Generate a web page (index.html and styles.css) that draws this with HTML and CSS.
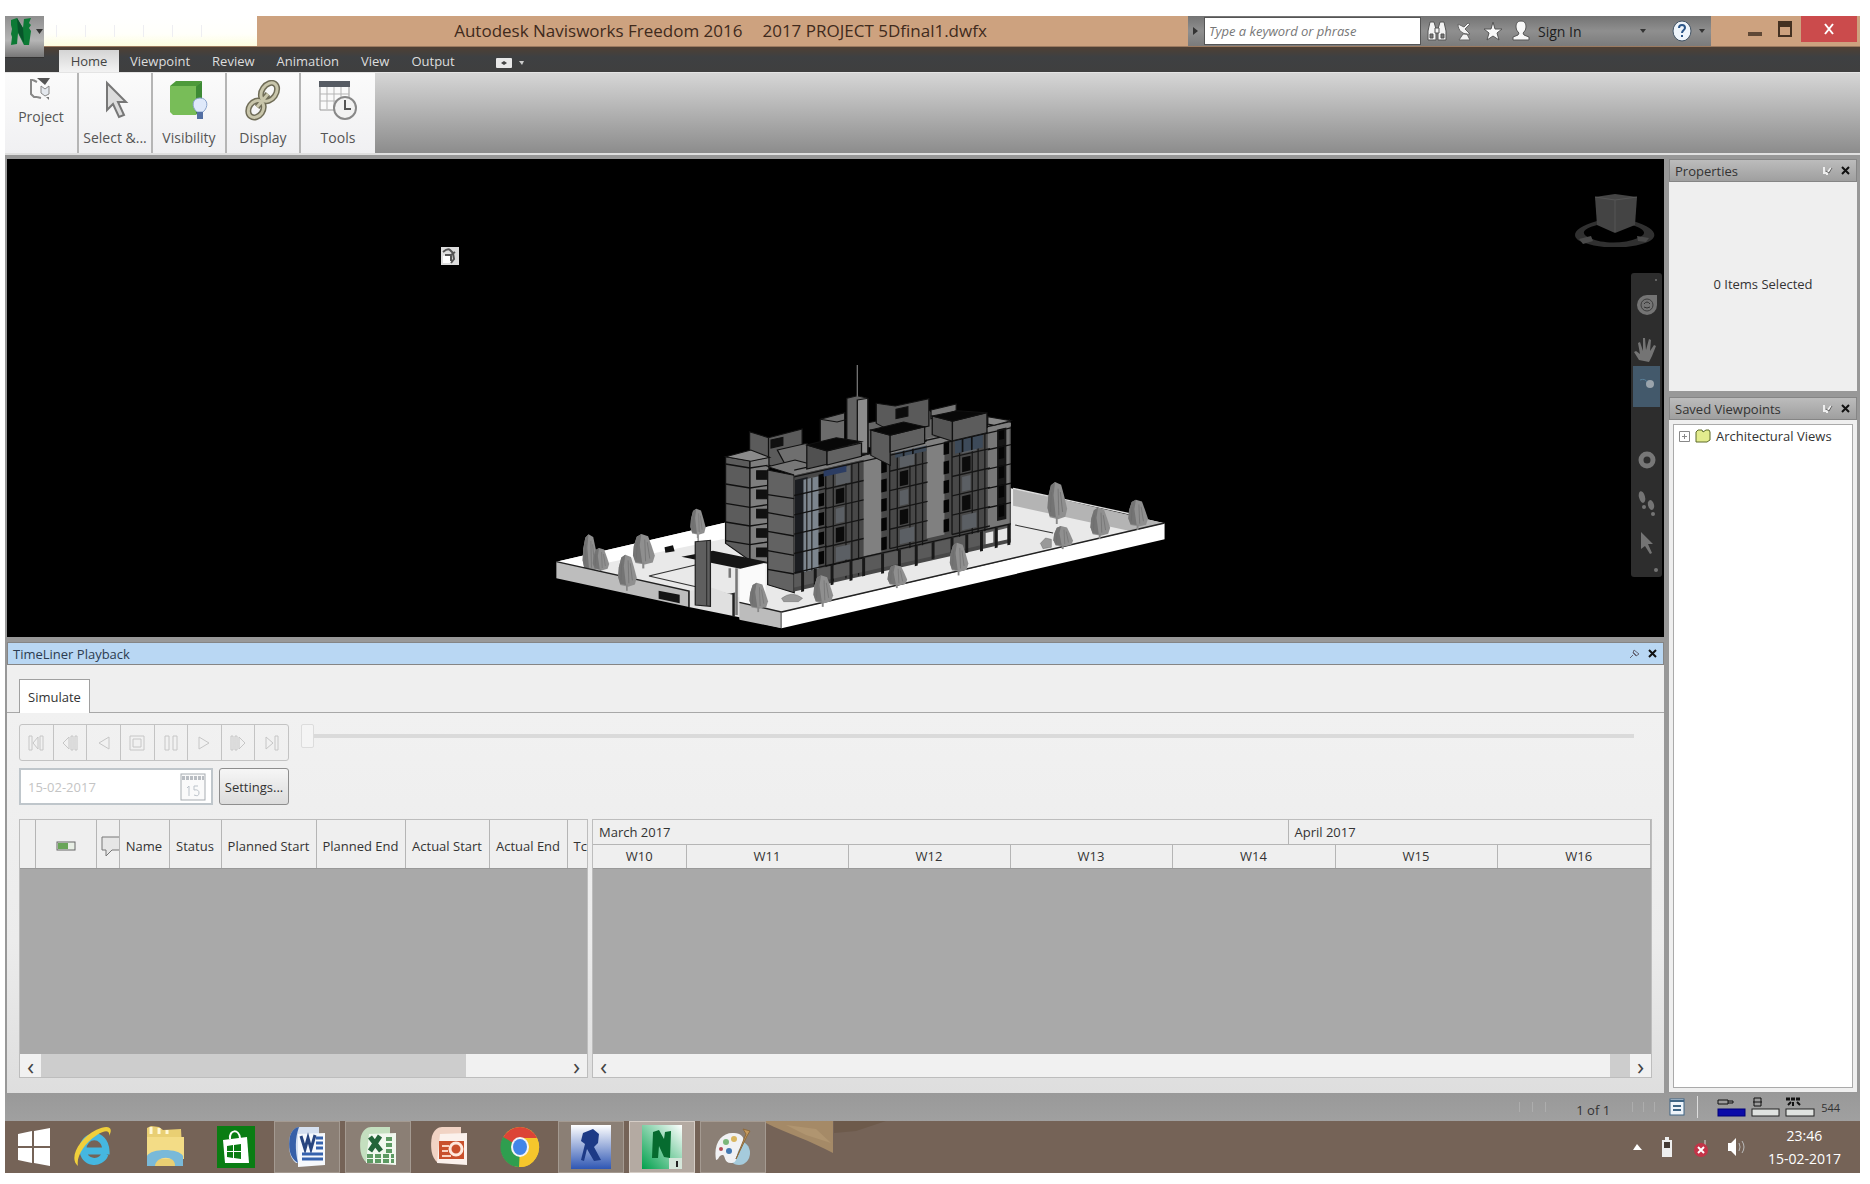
FILE: index.html
```html
<!DOCTYPE html>
<html lang="en">
<head>
<meta charset="utf-8">
<title>Autodesk Navisworks Freedom 2016</title>
<link rel="stylesheet" href="styles.css">
</head>
<body>
<div class="desktop">
  <header class="chrome">
    <button class="app-button" aria-label="Application menu">
      <svg width="22" height="28" viewBox="0 0 22 28"><path d="M1 2l6-2 6 10 1-9 7-1-2 5 2 2-2 3 2 3-2 14h-5L8 15l-1 11-6 1 1-8-1-3 1-5-1-4z" fill="#0c7a35"/><path d="M7 0l6 10 1 15L8 14z" fill="#07552a"/></svg>
      <svg width="7" height="5" viewBox="0 0 7 5"><path d="M0 0h7L3.500 5z" fill="#333"/></svg>
    </button>
    <div class="titlebar">
      <div class="quick-access"><i></i><i></i><i></i><i></i><i></i><i></i></div>
      <h1 class="title"><span>Autodesk Navisworks Freedom 2016</span><span>2017 PROJECT 5Dfinal1.dwfx</span></h1>
      <div class="infocenter">
        <span class="caret-right"></span>
        <input class="search" type="text" placeholder="Type a keyword or phrase" aria-label="Search">
        <button class="ic" aria-label="Find"><svg width="20" height="22" viewBox="0 0 20 22"><g fill="#f4f4f4" stroke="#555"><path d="M3 2h4l2 7v11H1v-9zM13 2h4l2 9v9h-8V9z"/><path d="M8 8h4v5H8z"/><path d="M3 14h3v4H3zM14 14h3v4h-3z" fill="#777"/></g></svg></button>
        <button class="ic" aria-label="Communication center"><svg width="20" height="22" viewBox="0 0 20 22"><path d="M3 4c0 7 5 11 12 10L10 9l5-5-2-1-4 4zM8 14l-4 6h11l-3-6z" fill="#f4f4f4" stroke="#666"/></svg></button>
        <button class="ic" aria-label="Favorites"><svg width="20" height="22" viewBox="0 0 20 22"><path d="M10 2l2 7h7l-5 4 2 7-6-4-6 4 2-7-5-4h7z" fill="#f8f8f8" stroke="#555"/></svg></button>
        <button class="sign-in"><svg width="20" height="24" viewBox="0 0 20 24"><path d="M10 2c4 0 5 3 5 6s-2 5-3 6l1 2 5 2v3H2v-3l5-2 1-2c-1-1-3-3-3-6s1-6 5-6z" fill="#f8f8f8" stroke="#555"/></svg>Sign In</button>
        <span class="caret-down push"></span>
        <button class="help" aria-label="Help"><svg width="20" height="22" viewBox="0 0 20 22"><ellipse cx="10" cy="11" rx="9" ry="10" fill="#eef4fa" stroke="#456"/><path d="M7 8c0-4 6-4 6 0 0 2-3 2-3 5M10 15v2" fill="none" stroke="#2c5688" stroke-width="2"/></svg></button>
        <span class="caret-down"></span>
      </div>
      <div class="window-buttons">
        <button class="minimize" aria-label="Minimize"><i></i></button>
        <button class="restore" aria-label="Restore"><i></i></button>
        <button class="close" aria-label="Close"><svg width="12" height="12" viewBox="0 0 12 12"><path d="M2 1l8 10M10 1L2 11" stroke="#fff" stroke-width="2"/></svg></button>
      </div>
    </div>
    <nav class="tabs">
      <button class="tab active">Home</button>
      <button class="tab">Viewpoint</button>
      <button class="tab">Review</button>
      <button class="tab">Animation</button>
      <button class="tab">View</button>
      <button class="tab">Output</button>
      <button class="ribbon-toggle" aria-label="Minimize ribbon"><svg width="28" height="10" viewBox="0 0 28 10"><rect width="16" height="10" rx="1" fill="#e8e8e8"/><path d="M5 5l3-2 3 2-3 2z" fill="#444"/><path d="M23 3h5l-2 4z" fill="#ccc"/></svg></button>
    </nav>
  </header>

  <section class="ribbon">
    <button class="panel-button first"><svg width="24" height="24" viewBox="0 0 24 24"><path d="M4 3H2v14l3 3h3M4 3l4 2M8 20l4 1" fill="none" stroke="#888" stroke-width="2"/><path d="M8 1h13l-5 7z" fill="#555"/><path d="M12 9l4 3 4-3v8l-4 2-4-3z" fill="#e4e8ee" stroke="#888"/><path d="M17 20h3v3z" fill="#777"/></svg>Project</button>
    <button class="panel-button"><svg width="40" height="42" viewBox="0 0 40 42"><path d="M12 3v27l6-6 6 13 5-2-6-13h8z" fill="#dcdcdc" stroke="#777" stroke-width="2"/></svg>Select &amp;...</button>
    <button class="panel-button"><svg width="40" height="42" viewBox="0 0 40 42"><path d="M1 6l6-5h26l-5 6z" fill="#4d9a3a"/><path d="M1 6h26v29H4l-3-3z" fill="#78bd58"/><path d="M27 7l6-6v24l-6 10z" fill="#3d8a34"/><path d="M28 32c-6-5-5-14 3-14s9 9 3 14z" fill="#dfe9fa" stroke="#8ba4cc"/><path d="M28 32h6v7h-6z" fill="#536fa3"/></svg>Visibility</button>
    <button class="panel-button"><svg width="40" height="42" viewBox="0 0 40 42"><g fill="none" stroke="#6f6c57" stroke-width="6"><ellipse cx="26" cy="12" rx="7" ry="10" transform="rotate(35 26 12)"/><ellipse cx="13" cy="29" rx="7" ry="9" transform="rotate(35 13 29)"/><path d="M14 27l11-13"/></g><g fill="none" stroke="#c9c6ab" stroke-width="3"><ellipse cx="26" cy="12" rx="7" ry="10" transform="rotate(35 26 12)"/><ellipse cx="13" cy="29" rx="7" ry="9" transform="rotate(35 13 29)"/><path d="M14 27l11-13"/></g></svg>Display</button>
    <button class="panel-button"><svg width="40" height="42" viewBox="0 0 40 42"><path d="M2 2h29v28H2z" fill="#fafafa" stroke="#999"/><path d="M1 1h31v6H1z" fill="#565b63"/><path d="M2 14h29M2 21h29M9 7v22M16 7v22M23 7v22" stroke="#b5b5b5"/><circle cx="27" cy="28" r="11" fill="#f2f2f2" stroke="#888" stroke-width="2"/><path d="M27 20v9h6" fill="none" stroke="#555" stroke-width="2"/></svg>Tools</button>
  </section>

  <main class="workspace">
    <div class="left">
      <section class="viewport">
        <svg class="pointer" width="18" height="18" viewBox="0 0 18 18"><rect width="18" height="18" fill="#ddd"/><path d="M2 9l9-2v9H2z" fill="#fff"/><path d="M2 5q5-4 7-2l3 3 1 6-3 4M4 8h6v6M10 8l4-3" fill="none" stroke="#555" stroke-width="2"/></svg>
        <svg class="model" viewBox="0 0 1568 870" preserveAspectRatio="none">
          <defs>
            <g id="tree"><path d="M22 0l16 8 8 34 8 38-5 24-19 8-22-6-6-28 2-34 7-34z" fill="#8f8f8f"/><path d="M22 0l-4 40 6 66-16-4-6-24 2-34 7-34z" fill="#747474"/><path d="M36 30l6 60M30 20l2 80M12 30l-2 60" stroke="#6c6c6c" stroke-width="2"/><path d="M24 104h5v22h-5z" fill="#888"/></g>
            <g id="floors"><path d="M0 0v290" stroke="#111" stroke-width="3"/><path d="M0 58h90M0 116h90M0 174h90M0 232h90M0 290h90" stroke="#151515" stroke-width="4"/><path d="M18 0v340M62 0v340M78 0v340M48 0v340" stroke="#161616" stroke-width="3"/><path d="M24 66h20v44H24zM24 182h20v44H24z" fill="#0b0b0b"/><path d="M24 4h34v50H24zM24 124h20v44H24zM24 240h34v44H24z" fill="#5b5f64"/></g>
            <g id="slits"><path d="M2 10h13v38H2zM2 68h13v38H2zM2 126h13v38H2zM2 184h13v38H2zM2 242h13v38H2z" fill="#050505"/></g>
          </defs>
          <path d="M65 635L465 518 900 440l245-25 365 105-910 267z" fill="#e9e9e9"/>
          <path d="M65 635L465 518v48L180 640l-60 15z" fill="#fff"/>
          <path d="M1150 415l360 105-85 22-275-75z" fill="#b4b4b4"/>
          <path d="M1150 415l290 80" stroke="#ddd" stroke-width="4"/>
          <path d="M285 678l160-48M285 678l200 58M1155 525l90 24M430 745l60-16" stroke="#333" stroke-width="3"/>
          <use href="#tree" transform="translate(1230 396) scale(.9 1)"/><use href="#tree" transform="translate(382 476) scale(.7 .7)"/><path d="M402 545v30" stroke="#999" stroke-width="4"/>
          <g stroke="#111" stroke-width="3">
            <path d="M524 245l45 18 80-26v100l-60 20-65-40z" fill="#5b5b5b"/><path d="M569 263v60"/><path d="M575 270l28-8v24l-28 8z" fill="#111"/>
            <path d="M590 300l70-20 40 60-80 30z" fill="#6f6f6f"/>
            <path d="M692 208l58-20v120h-58z" fill="#6b6b6b"/><path d="M692 208l40 8 25-8" fill="none"/>
            <path d="M800 220l150-40 60 60-150 70-60-20z" fill="#666"/>
            <path d="M825 160l45 8 80-22v82l-80 22-45-30z" fill="#5a5a5a"/><path d="M872 178l28-8v28l-28 8z" fill="#0c0c0c"/>
            <path d="M955 180l60-18v20l-60 24z" fill="#777"/>
            <path d="M755 145l25-8 25 8v170h-50z" fill="#626262"/><path d="M780 150l25-5v165h-25z" fill="#8b8b8b"/><path d="M780 45v95" stroke="#777"/>
            <path d="M467 320l58 12v300l-58-52z" fill="#5c5c5c"/><path d="M525 332l45-10v318l-45-8z" fill="#7e7e7e"/>
            <path d="M467 320l60-20 45 22-45 12z" fill="#8b8b8b"/>
            <path d="M467 342l58 12 42-8M467 402l58 12 42-8M467 460l58 12 42-8M467 516l58 12 42-8M467 572l58 12 42-8" fill="none" stroke-width="4"/>
            <path d="M541 362h24v26h-24zM541 420h24v26h-24zM541 478h24v26h-24zM541 536h24v26h-24zM541 594h24v26h-24z" fill="#111"/>
            <path d="M567 360l63 16v352l-63-24z" fill="#626262"/>
            <path d="M567 350l65-20 60 20-60 26z" fill="#777"/>
          </g>
          <g transform="matrix(1 -.285 0 1 0 0)">
            <path d="M630 556h515v348H630z" fill="#484848"/>
            <path d="M632 570h30v290h-30z" fill="#1b1d21"/><path d="M652 575h36v290h-36z" fill="#7c858e"/><path d="M660 575v280M672 575v280" stroke="#222" stroke-width="3"/>
            <path d="M795 545h42v300h-42zM945 535h42v300h-42z" fill="#808080"/>
            <path d="M1090 535h52v310h-52z" fill="#777"/><path d="M1112 550h22v280h-22z" fill="#161616"/>
            <use href="#floors" x="705" y="560"/><use href="#floors" x="857" y="550"/><use href="#floors" x="1005" y="550"/>
            <use href="#slits" x="686" y="560"/><use href="#slits" x="835" y="560"/><use href="#slits" x="983" y="548"/><use href="#slits" x="1114" y="540"/>
            <path d="M700 560h54v20h-54z" fill="#2c3d63"/><path d="M870 548h74v24h-74zM1012 550h66v50h-66z" fill="#3d4a59"/><path d="M890 548v24M912 548v24M1030 550v50M1052 550v50" stroke="#111" stroke-width="4"/>
            <path d="M630 550h515" stroke="#808080" stroke-width="12"/><path d="M630 540h515M630 560h515M630 616h78M630 674h78M630 732h78M630 790h78M630 848h515M1090 610h55M1090 668h55M1090 726h55M1090 784h55" stroke="#111" stroke-width="4"/>
            <path d="M630 852h515v40H630z" fill="#5a5a5a"/>
            <path d="M650 850v60M680 850v50M720 850v60M765 850v60M795 850v55M840 850v60M880 850v50M920 850v60M960 850v50M1005 850v50M1040 850v55M1075 850v60M1110 850v60M1140 850v60" stroke="#181818" stroke-width="7"/>
            <path d="M1085 858h18v34h-18zM1114 858h22v34h-22z" fill="#e5e5e5"/>
          </g>
          <g stroke="#111" stroke-width="3">
            <path d="M567 434l63 12M567 488l63 14M567 544l63 14M567 602l63 14M567 658l63 14" stroke-width="4"/>
            <path d="M660 285l48 18v40l-48 14z" fill="#505050"/><path d="M708 303l82-24v40l-82 26z" fill="#626262"/><path d="M660 285l70-22 60 12-82 28z" fill="#080808"/>
            <path d="M812 240l46 16v90l-46-30z" fill="#5c5c5c"/><path d="M858 256l82-26v50l-82 26z" fill="#606060"/><path d="M812 240l78-24 50 14-82 26z" fill="#080808"/>
            <path d="M958 198l48 16v60l-48-20z" fill="#555"/><path d="M1006 214l82-26v60l-82 24z" fill="#5c5c5c"/><path d="M958 198l60-16 68 6-80 26z" fill="#080808"/>
            <path d="M1090 200l55 12-40 14-15-4z" fill="#888"/>
          </g>
          <use href="#tree" transform="translate(126 553) scale(.7 1)"/><use href="#tree" transform="translate(150 594) scale(.75 .6)"/><use href="#tree" transform="translate(245 552) scale(1 .82)"/>
          <path d="M322 592l20-6 4 18-22 4z" fill="#111"/>
          <path d="M65 635l315 88v48L65 685zM500 765l100 22v48l-100-26z" fill="#bdbdbd"/>
          <path d="M380 723l55-10 165 74-40 30-180-46z" fill="#e0e0e0"/><path d="M500 655l62-14v130l-62-14z" fill="#fafafa"/>
          <path d="M500 757l100 29v48l-100-28z" fill="#bcbcbc"/><path d="M65 635l315 88v48M500 757l100 29v48" fill="none" stroke="#222" stroke-width="4"/>
          <path d="M308 722l50 12v26l-50-14z" fill="#151515"/>
          <path d="M600 787l910-267v48L600 835z" fill="#fff"/><path d="M600 786l910-267" stroke="#222" stroke-width="4"/>
          <path d="M362 620l75-18 130 34-65 20z" fill="#151515"/>
          <path d="M395 575l36-4v198l-36-4z" fill="#5f5f5f" stroke="#222" stroke-width="3"/><path d="M422 573v195" stroke="#333" stroke-width="3"/>
          <path d="M493 655v140M477 655v28" stroke="#777" stroke-width="6"/><path d="M486 730v70" stroke="#222" stroke-width="6"/>
          <use href="#tree" transform="translate(210 614) scale(.85 .86)"/><use href="#tree" transform="translate(522 698) scale(.85 .7)"/><use href="#tree" transform="translate(674 676) scale(.9 .75)"/><use href="#tree" transform="translate(850 645) scale(.9 .55)"/><use href="#tree" transform="translate(998 578) scale(.85 .78)"/>
          <use href="#tree" transform="translate(1244 528) scale(.9 .55)"/><use href="#tree" transform="translate(1332 473) scale(.9 .75)"/><use href="#tree" transform="translate(1422 449) scale(.9 .72)"/>
          <path d="M600 745q25-25 50 0l-10 10h-35zM1215 580l12-16 14 4v24l-20 4z" fill="#999" stroke="#555"/>
        </svg>
        <svg class="viewcube" width="80" height="54" viewBox="0 0 80 54"><path d="M22 28C-6 36-4 46 10 50c16 6 44 6 60 0 14-5 14-14-12-22l-1 4c16 5 14 10 6 13-14 6-36 6-48 0-10-4-8-9 7-13z" fill="#303030"/><path d="M4 46l12-3 2 5-10 3zM62 43l12 2-3 4-8-1z" fill="#4a4a4a"/><path d="M20 4l20-3 22 3-2 28-20 8-18-8z" fill="#444"/><path d="M20 4l20 3 22-3M40 7v32" fill="none" stroke="#555"/></svg>
        <aside class="navbar">
          <svg width="31" height="304" viewBox="0 0 31 304"><rect width="31" height="304" rx="3" fill="#2d2d2d"/><rect x="2" y="93" width="27" height="41" fill="#43596b"/><g fill="#747474"><path d="M16 22h10v10a10 10 0 11-10-10z"/><path d="M8 87l-5-8 2-1 4 3-2-11 2-1 3 9V65h2l1 12 3-11 2 1-1 11 4-6 2 1-4 10-3 6z"/><circle cx="16" cy="187" r="6" fill="none" stroke="#777" stroke-width="5"/><ellipse cx="11" cy="224" rx="3" ry="6" transform="rotate(-15 11 224)"/><ellipse cx="20" cy="232" rx="3" ry="5" transform="rotate(-15 20 232)"/><circle cx="13" cy="234" r="2"/><circle cx="22" cy="241" r="2"/><path d="M10 259v17l4-3 5 8 2-1-4-9h5z"/><circle cx="25" cy="7" r="1"/><circle cx="25" cy="297" r="2"/></g><circle cx="16" cy="32" r="6" fill="none" stroke="#3c3c3c" stroke-width="1"/><path d="M13 31q3-4 6 0M13 34q3 2 6 0" fill="none" stroke="#333"/><circle cx="19" cy="111" r="4" fill="#9aa4ac"/><path d="M9 107q5-2 7 2" fill="none" stroke="#5a8099"/></svg>
        </aside>
      </section>

      <section class="timeliner">
        <header class="dock-title blue"><h2>TimeLiner Playback</h2><span class="dock-icons"><svg width="11" height="10" viewBox="0 0 11 10"><path d="M1 9l3-3M4 3l4 4M5 1l5 4-3 2-3-3z" fill="none" stroke="#667"/></svg><svg width="9" height="9" viewBox="0 0 9 9"><path d="M1 1l7 7M8 1L1 8" stroke="#111" stroke-width="2"/></svg></span></header>
        <div class="subtabs"><button class="subtab">Simulate</button></div>
        <div class="timeliner-body">
          <div class="playback">
            <div class="transport">
              <button disabled aria-label="Rewind"><svg width="16" height="16" viewBox="0 0 16 16"><path d="M1 1h3v14H1zM10 2v12L5 8zM12 1h3v14h-3z"/></svg></button>
              <button disabled aria-label="Step back"><svg width="16" height="16" viewBox="0 0 16 16"><path d="M7 2v12L1 8zM9 1h2v14H9zM13 1h2v14h-2z"/></svg></button>
              <button disabled aria-label="Reverse play"><svg width="16" height="16" viewBox="0 0 16 16"><path d="M13 2v12L3 8z"/></svg></button>
              <button disabled aria-label="Stop"><svg width="16" height="16" viewBox="0 0 16 16"><path d="M1 1h14v14H1zM4 4h8v8H4z"/></svg></button>
              <button disabled aria-label="Pause"><svg width="16" height="16" viewBox="0 0 16 16"><path d="M2 1h4v14H2zM10 1h4v14h-4z"/></svg></button>
              <button disabled aria-label="Play"><svg width="16" height="16" viewBox="0 0 16 16"><path d="M3 2v12l10-6z"/></svg></button>
              <button disabled aria-label="Step forward"><svg width="16" height="16" viewBox="0 0 16 16"><path d="M9 2v12l6-6zM5 1h2v14H5zM1 1h2v14H1z"/></svg></button>
              <button disabled aria-label="Forward"><svg width="16" height="16" viewBox="0 0 16 16"><path d="M2 2v12l7-6zM11 1h3v14h-3z"/></svg></button>
            </div>
            <input class="slider" type="range" min="0" max="100" value="0" disabled aria-label="Simulation position">
          </div>
          <div class="date-row">
            <div class="date-box">
              <input type="text" value="15-02-2017" disabled aria-label="Simulation date">
              <svg width="26" height="28" viewBox="0 0 26 28"><rect x="1" y="1" width="24" height="26" fill="#fafafa" stroke="#a8adb2"/><path d="M2 5h22" stroke="#b9bdc2" stroke-width="4" stroke-dasharray="3 1"/><path d="M7 15l2-2v10M18 13h-4v4q5-1 5 3t-5 2" fill="none" stroke="#bcc3ca"/></svg>
            </div>
            <button class="settings">Settings...</button>
          </div>
          <div class="split">
            <div class="pane tasks">
              <table>
                <colgroup><col class="w15"><col class="w61"><col class="w23"><col class="w50"><col class="w52"><col class="w95"><col class="w89"><col class="w84"><col class="w78"><col></colgroup>
                <thead><tr><th></th><th><svg width="20" height="10" viewBox="0 0 20 10"><rect x="1" y="1" width="18" height="8" fill="#e8efe5" stroke="#666"/><path d="M2 2h10v6H2z" fill="#69a558"/></svg></th><th class="flush"><svg width="18" height="22" viewBox="0 0 18 22"><path d="M18 2H1v13h4v6l6-6h7" fill="#e6e6e6" stroke="#777"/></svg></th><th>Name</th><th>Status</th><th>Planned Start</th><th>Planned End</th><th>Actual Start</th><th>Actual End</th><th class="cut">Tc</th></tr></thead>
              </table>
              <div class="empty"></div>
              <div class="scrollbar"><button aria-label="Scroll left">‹</button><span class="thumb wide"></span><button class="push" aria-label="Scroll right">›</button></div>
            </div>
            <div class="pane gantt">
              <table>
                <colgroup><col class="partial"><col class="week"><col class="week"><col class="week"><col class="before-month"><col class="after-month"><col class="week"><col></colgroup>
                <thead>
                  <tr class="months"><th colspan="5">March 2017</th><th colspan="3">April 2017</th></tr>
                  <tr class="weeks"><th>W10</th><th>W11</th><th>W12</th><th>W13</th><th colspan="2">W14</th><th>W15</th><th>W16</th></tr>
                </thead>
              </table>
              <div class="empty"></div>
              <div class="scrollbar"><button aria-label="Scroll left">‹</button><span class="thumb push"></span><button aria-label="Scroll right">›</button></div>
            </div>
          </div>
        </div>
      </section>
    </div>

    <div class="right">
      <section class="dock properties">
        <header class="dock-title"><h2>Properties</h2><span class="dock-icons"><svg width="11" height="10" viewBox="0 0 11 10"><path d="M2 1v6h3l4-5M5 7v2" fill="none" stroke="#eee" stroke-width="2"/><path d="M4 5l3 2 3-5" fill="none" stroke="#666"/></svg><svg width="9" height="9" viewBox="0 0 9 9"><path d="M1 1l7 7M8 1L1 8" stroke="#111" stroke-width="2"/></svg></span></header>
        <p class="selection">0 Items Selected</p>
      </section>
      <section class="dock viewpoints">
        <header class="dock-title"><h2>Saved Viewpoints</h2><span class="dock-icons"><svg width="11" height="10" viewBox="0 0 11 10"><path d="M2 1v6h3l4-5M5 7v2" fill="none" stroke="#eee" stroke-width="2"/><path d="M4 5l3 2 3-5" fill="none" stroke="#666"/></svg><svg width="9" height="9" viewBox="0 0 9 9"><path d="M1 1l7 7M8 1L1 8" stroke="#111" stroke-width="2"/></svg></span></header>
        <div class="tree-frame"><ul class="tree"><li><svg width="11" height="11" viewBox="0 0 11 11"><path d="M.5.5h10v10H.5zM3 5.500h5M5.500 3v5" fill="none" stroke="#888"/></svg><svg width="16" height="14" viewBox="0 0 16 14"><path d="M1 13V3l2-2h4l1 2 3-2h3l1 2v8l-3 2z" fill="#e3ec8e" stroke="#5d6b2a"/></svg>Architectural Views</li></ul></div>
      </section>
    </div>
  </main>

  <footer class="status">
    <span class="pager-ghost"><i></i><i></i><i></i></span>
    <span class="pages">1 of 1</span>
    <span class="pager-ghost"><i></i><i></i><i></i></span>
    <svg width="16" height="18" viewBox="0 0 16 18"><rect x="1" y="1" width="14" height="16" fill="#eef4fa" stroke="#3f6585"/><path d="M1 3h14M4 8h8M4 12h8" stroke="#3f6585" stroke-width="2"/></svg>
    <span class="divider"></span>
    <svg class="meters" width="98" height="20" viewBox="0 0 98 20"><rect x="1" y="12" width="27" height="7" fill="#0b0ba8" stroke="#007"/><rect x="35" y="12" width="27" height="7" fill="#dfe2e0" stroke="#222"/><rect x="69" y="12" width="28" height="7" fill="#dfe2e0" stroke="#222"/><path d="M1 3h10v4H1zM11 4h5v2h-5M37 1h7v8h-7zM36 5h9" fill="none" stroke="#111"/><path d="M69 2h15" stroke="#111" stroke-width="3" stroke-dasharray="4 1"/><path d="M71 8l3-3M76 5v4M80 5l3 3" stroke="#111" stroke-width="2"/></svg>
    <span class="memory">544</span>
  </footer>

  <nav class="taskbar">
    <button class="start" aria-label="Start"><svg width="34" height="38" viewBox="0 0 34 38"><path d="M1 6l14-3v15H1zM17 3l16-3v18H17zM1 20h14v15L1 32zM17 20h16v18l-16-3z" fill="#fff"/></svg></button>
    <button aria-label="Internet Explorer"><svg width="44" height="44" viewBox="0 0 44 44"><path d="M33 29c-4 11-22 10-22-5s22-18 23 2H14" fill="none" stroke="#45b7e0" stroke-width="7"/><path d="M6 41C-4 33 8 13 24 5c12-6 18-3 13 6 1-6-4-6-12-1C12 18 4 32 6 41z" fill="#f0cf3b"/></svg></button>
    <button aria-label="File Explorer"><svg width="40" height="44" viewBox="0 0 40 44"><path d="M2 3l4-2 8 1 4 3 18-1 2 37H2z" fill="#e9cf73"/><path d="M2 12h37v22H2z" fill="#f3dc86"/><path d="M6 2v7M14 3v6M22 5v4" stroke="#fff8d6" stroke-width="3"/><path d="M2 41V31c4-8 32-8 36 0v10h-8c1-11-19-11-20 0z" fill="#79b9d8"/></svg></button>
    <button aria-label="Store"><svg width="38" height="42" viewBox="0 0 38 42"><path d="M0 0h38v42H0z" fill="#0a7d13"/><path d="M6 14l24-3 2 26-24 0z" fill="#fff"/><path d="M13 13c-1-10 9-10 10-1" fill="none" stroke="#fff" stroke-width="2"/><path d="M10 20l6-1v6h-6zM17 19l7-1v7h-7zM10 26h6v6l-6-1zM17 26h7v7l-7-1z" fill="#0a7d13"/></svg></button>
    <button class="open" aria-label="Word"><svg width="38" height="42" viewBox="0 0 38 42"><path d="M2 10C4 4 8 1 12 1h19v36H8C1 32 0 20 2 10z" fill="#d5e0f0"/><path d="M2 10C4 4 8 1 11 1 7 12 7 24 10 37 1 32 0 20 2 10z" fill="#3760a8"/><path d="M10 8l27-1v32l-27 2z" fill="#f6f9fd"/><path d="M13 10l4 13 3-11 3 11 4-14" fill="none" stroke="#28457f" stroke-width="3"/><path d="M28 12h7M28 17h7M28 22h7M14 28h21M14 33h21" stroke="#3562ad" stroke-width="3"/></svg></button>
    <button class="open" aria-label="Excel"><svg width="38" height="42" viewBox="0 0 38 42"><path d="M2 10C4 4 8 1 12 1h19v36H8C1 32 0 20 2 10z" fill="#c4dfbf"/><path d="M10 8l27-1v32l-30-2z" fill="#f1f8ef"/><path d="M11 11l11 14M21 10L11 25" stroke="#24643a" stroke-width="5"/><path d="M27 13h8M27 19h8M27 25h8M8 30h27M8 35h27" stroke="#5d9a63" stroke-width="4" stroke-dasharray="6 2"/></svg></button>
    <button aria-label="PowerPoint"><svg width="38" height="42" viewBox="0 0 38 42"><path d="M2 10C4 4 8 1 12 1h19v36H8C1 32 0 20 2 10z" fill="#f1d3c4"/><path d="M10 8l27-1v32l-30-2z" fill="#fbf1ec"/><path d="M9 15h25v18H9z" fill="#c9502c"/><circle cx="26" cy="23" r="6" fill="none" stroke="#ffe9dd" stroke-width="3"/><path d="M12 20h7M12 25h6M12 30h9" stroke="#f9d2c0" stroke-width="2"/></svg></button>
    <button aria-label="Chrome"><svg width="40" height="42" viewBox="0 0 40 42"><ellipse cx="20" cy="21" rx="19" ry="20" fill="#f5c62c"/><path d="M20 21L3 12A19 20 0 0137 12z" fill="#dc4437"/><path d="M20 21l-17-10A19 20 0 0019 41z" fill="#2f9e4f"/><path d="M37 12H20v9l7 3-8 17A19 20 0 0037 12z" fill="#f5c62c"/><ellipse cx="20" cy="21" rx="9" ry="10" fill="#f4f4f4"/><ellipse cx="20" cy="21" rx="7" ry="8" fill="#4285e8"/></svg></button>
    <button class="open" aria-label="Revit"><svg width="40" height="44" viewBox="0 0 40 44"><defs><linearGradient id="rv" x2="0" y2="1"><stop stop-color="#fff"/><stop offset="1" stop-color="#2f57b4"/></linearGradient></defs><path d="M0 0h40v44H0z" fill="url(#rv)"/><path d="M12 8l10-4 6 5-1 9-4 4 7 13-7 1-7-12-3 12-3-1 4-16-4-3z" fill="#1d3a86"/></svg></button>
    <button class="open current" aria-label="Navisworks"><svg width="40" height="44" viewBox="0 0 40 44"><defs><linearGradient id="nw" x1="1" x2="0" y2="1"><stop stop-color="#fff"/><stop offset="1" stop-color="#00a04c"/></linearGradient></defs><path d="M0 0h40v44H0z" fill="url(#nw)"/><path d="M11 7l6-2 5 9 1-7 6-1-1 27-6-1-5-11-1 12h-6z" fill="#066b2f"/><path d="M27 33h13v11H27z" fill="#d5e6da"/><path d="M35 36v6" stroke="#222" stroke-width="2"/></svg></button>
    <button class="open" aria-label="Paint"><svg width="38" height="42" viewBox="0 0 38 42"><ellipse cx="25" cy="27" rx="11" ry="12" fill="#a5cbdc"/><path d="M2 34C-1 17 8 6 20 7c12 1 11 9 6 15s-1 15-9 15-5-9-9-8-3 5-6 5z" fill="#f0f1f3"/><circle cx="12" cy="16" r="3" fill="#7bb77b"/><circle cx="20" cy="13" r="3" fill="#d9b65f"/><circle cx="7" cy="23" r="2" fill="#b44c55"/><circle cx="15" cy="25" r="3" fill="#4379b3"/><path d="M22 33L32 8l-3-5 7 2-3 5z" fill="#c79a5b" stroke="#8d6a3c"/></svg></button>
    <svg class="wedge" width="120" height="34" viewBox="0 0 120 34"><path d="M0 0h67v32C45 20 20 12 0 2z" fill="#a58a67"/><path d="M20 4l30 4 15 14-25-8z" fill="#b09570"/><path d="M68 0h52L90 10 68 12z" fill="#6d5a4b"/></svg>
    <div class="tray">
      <svg width="9" height="6" viewBox="0 0 9 6"><path d="M0 6l4-6 5 6z" fill="#fff"/></svg>
      <svg width="14" height="22" viewBox="0 0 14 22"><path d="M5 1h4v3H5zM2 4h10v17H2z" fill="#eee"/><path d="M4 6h6v6H4z" fill="#443a34"/></svg>
      <svg width="18" height="22" viewBox="0 0 18 22"><path d="M13 4v6M9 9v5" stroke="#a9a09a" stroke-width="2"/><circle cx="9" cy="14" r="7" fill="#c33448"/><path d="M6 11l6 6M12 11l-6 6" stroke="#fff" stroke-width="2"/></svg>
      <svg width="18" height="20" viewBox="0 0 18 20"><path d="M0 6h3l5-5v18l-5-5H0z" fill="#fff"/><path d="M11 6q2 4 0 8M14 4q4 6 0 12" fill="none" stroke="#bbb"/></svg>
      <div class="clock"><time>23:46</time><time>15-02-2017</time></div>
    </div>
  </nav>
</div>
</body>
</html>
```

FILE: styles.css
```css
* { box-sizing: border-box; }
body {
  margin: 0;
  background: #fff;
  color: #333;
  font-family: "Open Sans", "Noto Sans", sans-serif;
  font-size: 13px;
}
button, input {
  margin: 0;
  padding: 0;
  border: 0;
  background: none;
  color: inherit;
  font: inherit;
}
h1, h2, p, ul { margin: 0; padding: 0; font-weight: 400; }
svg { display: block; flex: none; }
.push { margin-left: auto; }

.desktop {
  display: flex;
  flex-direction: column;
  min-height: calc(100vh - 28px);
  margin: 16px 10px 12px 5px;
  background: #989898;
}

/* Title bar and ribbon tabs */
.chrome { position: relative; }
.app-button {
  position: absolute;
  z-index: 1;
  top: 0;
  left: 0;
  display: flex;
  align-items: center;
  gap: 4px;
  width: 39px;
  height: 42px;
  padding: 0 0 10px 5px;
  background: linear-gradient(#8f8f8f, #b5b5b5 60%, #777);
  border-bottom: 1px solid #333;
}
.titlebar {
  display: flex;
  height: 31px;
  padding-left: 39px;
  background: #cda27f;
  border-bottom: 1px solid #9b7a60;
}
.quick-access {
  display: flex;
  align-items: center;
  gap: 20px;
  width: 213px;
  padding-left: 12px;
  background: linear-gradient(#fff, #fffffa 60%, #fdfde0);
}
.quick-access i { width: 9px; height: 12px; border-left: 1px solid #eeeef2; }
.title {
  display: flex;
  flex: 1;
  justify-content: center;
  gap: 20px;
  padding-right: 4px;
  color: #402a1c;
  font-size: 17px;
  line-height: 30px;
  white-space: nowrap;
}
.infocenter {
  display: flex;
  align-items: center;
  width: 523px;
  padding-right: 6px;
  background: linear-gradient(#747474, #8f8f8f 50%, #7b7b7b);
  color: #1c1c1c;
}
.caret-right { margin: 0 6px 0 5px; border: 4px solid transparent; border-left: 5px solid #333; border-right: 0; }
.caret-down { border: 3px solid transparent; border-top: 4px solid #333; border-bottom: 0; }
.search {
  width: 217px;
  height: 28px;
  margin-right: 2px;
  padding-left: 4px;
  background: #fff;
  border: 1px solid #555;
  font-style: italic;
}
.search::placeholder { color: #777; opacity: 1; }
.ic { display: flex; justify-content: center; width: 28px; }
.sign-in { display: flex; align-items: center; gap: 7px; margin-left: 4px; font-size: 14px; }
.help { margin: 0 7px 0 26px; }
.window-buttons { display: flex; align-items: flex-start; padding-right: 3px; width: 149px; }
.window-buttons button { display: flex; align-items: center; justify-content: center; height: 26px; }
.minimize { flex: 1; padding-left: 30px; }
.minimize i { width: 14px; height: 4px; margin-top: 10px; background: #5f4836; }
.restore { width: 32px; margin-right: 0; }
.restore i { width: 14px; height: 16px; border: 2px solid #443122; border-top-width: 6px; }
.window-buttons .close { width: 56px; background: #cb4b4c; }
.tabs {
  display: flex;
  align-items: flex-end;
  height: 25px;
  padding-left: 54px;
  background: linear-gradient(#4f4034, #3e4042 40%, #3f3f3f);
  color: #ddd;
}
.tab { height: 22px; padding: 0 11px; line-height: 18px; }
.tab.active { width: 60px; background: linear-gradient(#d4d4d4, #f3f3f3); color: #444; }
.ribbon-toggle { margin-left: 30px; height: 18px; }

.ribbon {
  display: flex;
  height: 83px;
  background: linear-gradient(#d6d6d6, #8c8c8c);
  border-top: 1px solid #e4e4e4;
  border-bottom: 2px solid #e0e0e0;
}
.panel-button {
  display: flex;
  flex-direction: column;
  align-items: center;
  justify-content: flex-start;
  gap: 7px;
  width: 74px;
  padding-top: 7px;
  background: linear-gradient(#fbfbfb, #f0f0f2);
  border-right: 2px solid #b5b5b5;
  color: #555;
  font-size: 14px;
  line-height: 18px;
}
.panel-button:last-child { border-right: 0; }
.panel-button.first { padding-top: 4px; }

/* Work area */
.workspace {
  display: flex;
  flex: 1;
  gap: 5px;
  padding: 4px 3px 0 2px;
  background: #989898;
}
.left { display: flex; flex: 1; flex-direction: column; min-width: 0; }
.viewport { position: relative; flex: 1; min-height: 478px; background: #000; overflow: hidden; }
.pointer { position: absolute; left: 26.200%; top: 88px; }
.model { position: absolute; left: 31.500%; top: 191px; width: 660px; height: 290px; }
.viewcube { position: absolute; right: 9px; top: 34px; }
.navbar { position: absolute; right: 2px; top: 114px; }

.dock-title {
  display: flex;
  align-items: center;
  justify-content: space-between;
  height: 23px;
  padding: 0 6px 0 5px;
  background: linear-gradient(#bcbcbc, #9f9f9f);
  border: 1px solid #858585;
}
.dock-title h2 { font-size: 13px; line-height: 20px; }
.dock-title.blue { background: #b9d7f3; color: #2c3c50; }
.dock-icons { display: flex; align-items: center; gap: 8px; }

.timeliner { margin-top: 5px; background: #efefef; }
.subtabs { height: 48px; padding: 14px 0 0 12px; border-bottom: 1px solid #a8a8a8; }
.subtab {
  width: 71px;
  height: 34px;
  background: #fff;
  border: 1px solid #a0a0a0;
  border-bottom: 0;
}
.timeliner-body { padding: 11px 12px 15px; background: linear-gradient(#f1f1f1, #ececec 60%, #dedede); }
.playback { display: flex; align-items: flex-start; gap: 12px; padding-right: 18px; }
.transport { display: flex; width: 270px; height: 37px; border: 1px solid #c3c3c3; border-radius: 3px; }
.transport button { display: flex; flex: 1; align-items: center; justify-content: center; border-right: 1px solid #c3c3c3; }
.transport button:last-child { border-right: 0; }
.transport path { fill: #f1f1f1; stroke: #c6c6c6; }
.slider { flex: 1; height: 24px; appearance: none; background: linear-gradient(#dadada, #dadada) center / 100% 4px no-repeat; }
.slider::-webkit-slider-thumb { appearance: none; width: 13px; height: 24px; background: #f4f4f4; border: 1px solid #dcdcdc; border-radius: 2px; }
.date-row { display: flex; gap: 6px; margin-top: 7px; }
.date-box { display: flex; align-items: center; justify-content: space-between; width: 194px; height: 37px; padding: 0 5px 0 7px; background: #fff; border: 2px solid #bfc6cb; }
.date-box input { width: 120px; color: #c4c4c4; }
.settings { width: 70px; height: 37px; background: linear-gradient(#f6f6f6, #dcdcdc); border: 1px solid #8e8e8e; border-radius: 3px; }

.split { display: grid; grid-template-columns: 569px 1fr; gap: 4px; margin-top: 14px; }
.pane { display: flex; flex-direction: column; min-width: 0; border: 1px solid #bdbdbd; }
.pane table { width: 100%; border-collapse: collapse; table-layout: fixed; background: #efefef; }
.pane th { height: 24px; padding: 0; border-right: 1px solid #b5b5b5; font-weight: 400; white-space: nowrap; }
.pane th svg { margin: 0 auto; }
.tasks th { height: 48px; padding-top: 4px; }
.pane .flush svg { margin: 0 0 0 auto; }
.pane .cut { border-right: 0; text-align: right; }
.w15 { width: 15px; } .w61 { width: 61px; } .w23 { width: 23px; } .w50 { width: 50px; }
.w52 { width: 52px; } .w95 { width: 95px; } .w89 { width: 89px; } .w84 { width: 84px; } .w78 { width: 78px; }
.partial { width: 93px; }
.week { width: 162px; }
.before-month { width: 116px; }
.after-month { width: 47px; }
.months th { padding-left: 6px; border-bottom: 1px solid #b5b5b5; text-align: left; }
.weeks th:last-child { padding-left: 10px; }
.empty { flex: 1; min-height: 186px; background: #a9a9a9; border-top: 1px solid #999; }
.scrollbar { display: flex; height: 23px; background: #f1f1f1; }
.scrollbar button { width: 21px; color: #444; font-size: 24px; line-height: 16px; }
.thumb { width: 20px; background: #cdcdcd; }
.thumb.wide { width: 425px; }

.right { display: flex; flex-direction: column; gap: 6px; width: 188px; padding-bottom: 1px; }
.dock { background: #efefef; }
.selection { height: 209px; padding-top: 91px; line-height: 22px; text-align: center; }
.viewpoints { display: flex; flex: 1; flex-direction: column; }
.tree-frame { display: flex; flex: 1; padding: 4px; }
.tree { flex: 1; padding: 2px 0 0 5px; background: #fff; border: 1px solid #aaa; list-style: none; }
.tree li { display: flex; align-items: center; gap: 5px; line-height: 18px; }

.status {
  display: flex;
  align-items: center;
  justify-content: flex-end;
  height: 28px;
  padding-right: 20px;
  background: linear-gradient(#999, #a0a0a0);
}
.pages { margin: 6px 22px 0; }
.pager-ghost { display: flex; gap: 12px; margin-right: 8px; }
.pager-ghost i { width: 1px; height: 10px; background: #adadad; }
.pages + .pager-ghost { gap: 10px; margin-right: 14px; }
.divider { width: 1px; height: 22px; margin: 0 19px 0 12px; background: #ddd; }
.memory { margin-left: 6px; font-size: 11px; }

/* Taskbar */
.taskbar { display: flex; gap: 5px; height: 52px; background: #756357; color: #fff; }
.taskbar button { display: flex; align-items: center; justify-content: center; width: 66px; }
.taskbar .start { width: 51px; padding-left: 6px; }
.taskbar .open { background: #8b7f75; border: 1px solid #a49a91; }
.taskbar .current { background: #b4aaa2; border-color: #d5cdc6; }
.wedge { margin-left: -5px; }
.tray { display: flex; align-items: center; gap: 18px; margin-left: auto; padding-right: 19px; }
.clock { display: flex; flex-direction: column; align-items: center; margin-left: 4px; font-size: 14px; line-height: 23px; }
```
